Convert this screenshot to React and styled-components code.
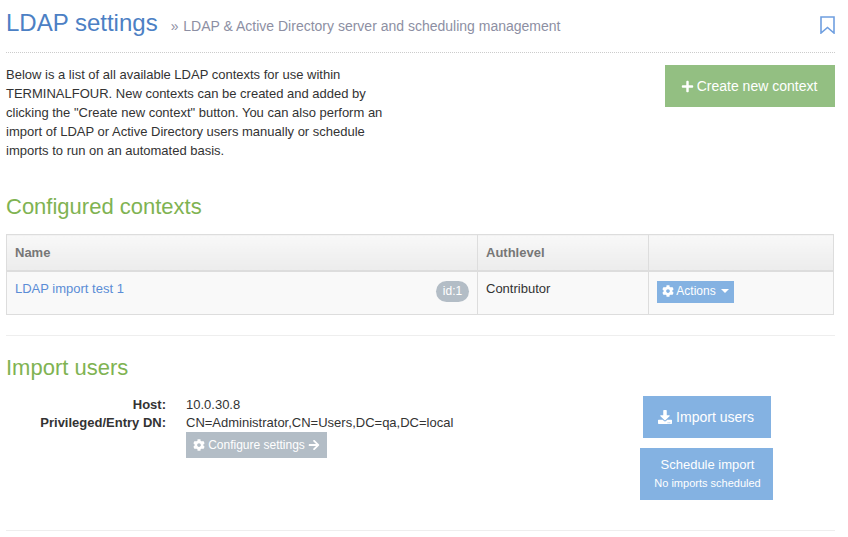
import React from 'react';
import styled, { createGlobalStyle } from 'styled-components';
import { FaPlus, FaCog, FaArrowRight, FaDownload } from 'react-icons/fa';

const GlobalStyle = createGlobalStyle`
  html, body {
    margin: 0;
    padding: 0;
    background: #fff;
    font-family: "Liberation Sans", Arial, sans-serif;
    color: #333;
  }
  * { box-sizing: border-box; }
`;

const Page = styled.div`
  width: 848px;
  height: 537px;
  overflow: hidden;
  padding: 0 13px 0 6px;
`;

const Header = styled.header`
  height: 53px;
  display: flex;
  align-items: flex-start;
  justify-content: space-between;
  border-bottom: 1px dotted #ccc;
  padding-top: 9px;
`;

const TitleGroup = styled.div`
  display: flex;
  align-items: baseline;
`;

const Title = styled.h1`
  margin: 0;
  font-size: 24px;
  font-weight: 400;
  line-height: 28px;
  color: #4c80c4;
`;

const Subtitle = styled.span`
  margin-left: 13px;
  font-size: 14px;
  color: #8d8fa3;
`;

const Chevrons = styled.span`
  margin-right: 1px;
`;

const BookmarkIcon = styled.svg`
  margin-top: 7px;
  width: 15px;
  height: 18px;
  fill: none;
  stroke: #6f9fe0;
  stroke-width: 1.6;
`;

const Intro = styled.section`
  display: flex;
  justify-content: space-between;
  align-items: flex-start;
  padding-top: 12px;
`;

const IntroText = styled.p`
  margin: 0;
  width: 385px;
  font-size: 13px;
  line-height: 19px;
`;

const Button = styled.button`
  display: inline-flex;
  align-items: center;
  justify-content: center;
  gap: 4px;
  border: 0;
  padding: 0;
  color: #fff;
  font-family: inherit;
  background: ${p => p.$bg || '#84b2e2'};
`;

const CreateButton = styled(Button)`
  width: 170px;
  height: 42px;
  font-size: 14px;
  gap: 3px;
  padding-right: 2px;
`;

const SectionTitle = styled.h2`
  margin: 0;
  font-weight: 400;
  font-size: 22px;
  line-height: 26px;
  color: #7fb352;
`;

const ContextsTitle = styled(SectionTitle)`
  margin-top: 34px;
`;

const Table = styled.table`
  margin-top: 14px;
  width: 828px;
  border-collapse: collapse;
  table-layout: fixed;
  font-size: 13px;
`;

const Th = styled.th`
  height: 36px;
  padding: 0 8px;
  text-align: left;
  font-weight: 700;
  color: #777;
  border: 1px solid #ddd;
  border-bottom-width: 2px;
  background: linear-gradient(#f8f8f8, #ececec);
`;

const Td = styled.td`
  position: relative;
  height: 44px;
  padding: 9px 8px 0;
  vertical-align: top;
  border: 1px solid #ddd;
  background: #f9f9f9;
`;

const NameLink = styled.a`
  color: #5b8dd6;
  text-decoration: none;
`;

const IdBadge = styled.span`
  position: absolute;
  top: 9px;
  right: 8px;
  width: 33px;
  height: 21px;
  border-radius: 11px;
  background: #b3bdc6;
  color: #fff;
  font-size: 12px;
  line-height: 21px;
  text-align: center;
`;

const ActionsButton = styled(Button)`
  width: 77px;
  height: 22px;
  font-size: 12px;
  gap: 2px;
  padding-bottom: 1px;
`;

const Caret = styled.span`
  margin-left: 3px;
  border-left: 4px solid transparent;
  border-right: 4px solid transparent;
  border-top: 4px solid #fff;
`;

const Rule = styled.hr`
  margin: 0;
  border: 0;
  border-top: 1px solid #eee;
`;

const TableRule = styled(Rule)`
  margin-top: 20px;
`;

const ImportTitle = styled(SectionTitle)`
  margin-top: 19px;
`;

const ImportRow = styled.section`
  height: 149px;
  display: flex;
  justify-content: space-between;
  padding-top: 15px;
`;

const Details = styled.dl`
  margin: 0;
  display: grid;
  grid-template-columns: 160px 1fr;
  grid-auto-rows: 18px;
  column-gap: 20px;
  align-content: start;
  font-size: 13px;
  line-height: 18px;
`;

const Label = styled.dt`
  text-align: right;
  font-weight: 700;
`;

const Value = styled.dd`
  margin: 0;
`;

const ConfigureButton = styled(Button)`
  grid-column: 2;
  width: 141px;
  height: 26px;
  font-size: 12px;
  gap: 3px;
`;

const ImportActions = styled.div`
  width: 133px;
  margin-right: 62px;
  display: flex;
  flex-direction: column;
  align-items: center;
  gap: 10px;
`;

const ImportButton = styled(Button)`
  width: 128px;
  height: 42px;
  font-size: 14px;
  padding-right: 1px;
`;

const ScheduleButton = styled(Button)`
  width: 133px;
  height: 52px;
  flex-direction: column;
  gap: 5px;
  font-size: 13px;
  padding: 0 0 2px 2px;
`;

const ScheduleNote = styled.span`
  font-size: 11px;
`;

export default function App() {
  return (
    <Page>
      <GlobalStyle />
      <Header>
        <TitleGroup>
          <Title>LDAP settings</Title>
          <Subtitle><Chevrons>»</Chevrons> LDAP &amp; Active Directory server and scheduling management</Subtitle>
        </TitleGroup>
        <BookmarkIcon viewBox="0 0 15 18">
          <path d="M1 1H14V17L7.5 11.5L1 17Z" />
        </BookmarkIcon>
      </Header>
      <Intro>
        <IntroText>
          Below is a list of all available LDAP contexts for use within TERMINALFOUR. New contexts can be created and added by clicking the "Create new context" button. You can also perform an import of LDAP or Active Directory users manually or schedule imports to run on an automated basis.
        </IntroText>
        <CreateButton $bg="#93bf82"><FaPlus size={13} />Create new context</CreateButton>
      </Intro>
      <ContextsTitle>Configured contexts</ContextsTitle>
      <Table>
        <colgroup>
          <col style={{ width: 471 }} />
          <col style={{ width: 171 }} />
          <col />
        </colgroup>
        <thead>
          <tr>
            <Th>Name</Th>
            <Th>Authlevel</Th>
            <Th />
          </tr>
        </thead>
        <tbody>
          <tr>
            <Td>
              <NameLink href="#">LDAP import test 1</NameLink>
              <IdBadge>id:1</IdBadge>
            </Td>
            <Td>Contributor</Td>
            <Td>
              <ActionsButton><FaCog size={12} />Actions<Caret /></ActionsButton>
            </Td>
          </tr>
        </tbody>
      </Table>
      <TableRule />
      <ImportTitle>Import users</ImportTitle>
      <ImportRow>
        <Details>
          <Label>Host:</Label>
          <Value>10.0.30.8</Value>
          <Label>Privileged/Entry DN:</Label>
          <Value>CN=Administrator,CN=Users,DC=qa,DC=local</Value>
          <ConfigureButton $bg="#b3bdc6"><FaCog size={12} />Configure settings<FaArrowRight size={12} /></ConfigureButton>
        </Details>
        <ImportActions>
          <ImportButton><FaDownload size={14} />Import users</ImportButton>
          <ScheduleButton>
            Schedule import
            <ScheduleNote>No imports scheduled</ScheduleNote>
          </ScheduleButton>
        </ImportActions>
      </ImportRow>
      <Rule />
    </Page>
  );
}
